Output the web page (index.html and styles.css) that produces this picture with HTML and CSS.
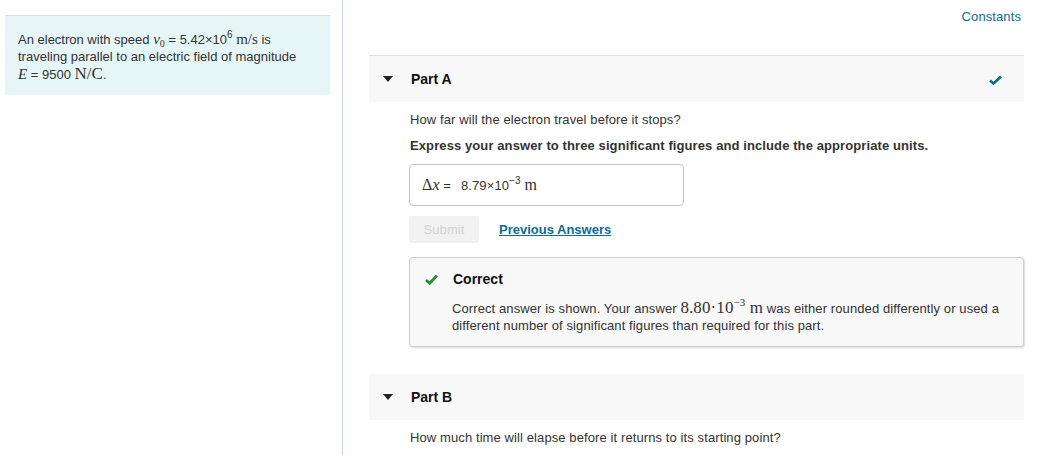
FILE: index.html
```html
<!DOCTYPE html>
<html>
<head>
<meta charset="utf-8">
<link rel="stylesheet" href="styles.css">
</head>
<body>
<div class="page">
  <aside class="left">
    <div class="intro">
      An electron with speed <span class="nw"><span class="mi">v</span><span class="sub">0</span> = 5.42×10<sup class="sup">6</sup> <span class="mu">m/s</span></span> is traveling parallel to an electric field of magnitude <span class="nw"><span class="mi">E</span> = 9500 <span class="mu big">N/C</span>.</span>
    </div>
  </aside>
  <main class="right">
    <div class="topbar"><a class="constants">Constants</a></div>

    <section class="part">
      <div class="part-head">
        <span class="tri"></span>
        <span class="part-title">Part A</span>
        <svg class="done" width="13" height="10" viewBox="0 0 13 10"><path d="M1 5.5 L4.5 8.5 L12 1.5" fill="none" stroke="#0d6b8f" stroke-width="2.6"/></svg>
      </div>
      <div class="part-body">
        <p class="q">How far will the electron travel before it stops?</p>
        <p class="instr">Express your answer to three significant figures and include the appropriate units.</p>
        <div class="answer">
          <span class="lbl"><span class="mu">Δ</span><span class="mi">x</span> =</span>
          <span class="val">8.79×10<sup class="sup">−3</sup> <span class="mu">m</span></span>
        </div>
        <div class="actions">
          <span class="submit">Submit</span>
          <a class="prev">Previous Answers</a>
        </div>
        <div class="feedback">
          <div class="fb-head">
            <svg class="ok" width="13" height="11" viewBox="0 0 13 11"><path d="M1 6 L4.7 9.3 L12 1.5" fill="none" stroke="#2f8a3c" stroke-width="2.8"/></svg>
            <span class="fb-title">Correct</span>
          </div>
          <p class="fb-text">Correct answer is shown. Your answer <span class="mu lg">8.80·10<sup class="sup2">−3</sup> m</span> was either rounded differently or used a different number of significant figures than required for this part.</p>
        </div>
      </div>
    </section>

    <section class="part partb">
      <div class="part-head">
        <span class="tri"></span>
        <span class="part-title">Part B</span>
      </div>
      <div class="part-body">
        <p class="q">How much time will elapse before it returns to its starting point?</p>
      </div>
    </section>
  </main>
</div>
</body>
</html>
```
FILE: styles.css
```css
html, body {
  margin: 0;
  padding: 0;
  background: #fff;
}
body {
  font-family: "Liberation Sans", Arial, sans-serif;
  font-size: 13px;
  letter-spacing: 0.1px;
  color: #333;
}
.page {
  display: flex;
  height: 455px;
  overflow: hidden;
}
.left {
  width: 337px;
  padding: 15px 0 0 5px;
  border-right: 1px solid #c6d6e1;
  flex: none;
}
.intro {
  width: 302px;
  height: 64px;
  padding: 15px 10px 0 13px;
  background: #e6f6f7;
  border-top: 1px solid #dcdfe2;
  line-height: 17px;
  letter-spacing: 0;
  color: #333;
}
.nw { white-space: nowrap; }
.mi {
  font-family: "Liberation Serif", "DejaVu Serif", serif;
  font-style: italic;
  font-size: 15px;
}
.mu {
  font-family: "Liberation Serif", "DejaVu Serif", serif;
  font-size: 15px;
}
.mu.big { font-size: 17px; }
.sub {
  font-family: "Liberation Serif", serif;
  font-size: 10px;
  vertical-align: -3px;
  line-height: 0;
}
.sup {
  font-size: 10px;
  vertical-align: 6px;
  line-height: 0;
}
.right {
  flex: 1;
  padding: 0 17px 0 26px;
}
.topbar {
  display: flex;
  justify-content: flex-end;
  height: 55px;
  padding-right: 3px;
}
.constants {
  color: #0b6a9a;
  margin-top: 9px;
  line-height: 15px;
}
.part-head {
  height: 46px;
  border-top: 1px solid #e0e0e0;
  background: #f8f8f8;
  display: flex;
  align-items: center;
  padding-left: 14px;
  padding-right: 22px;
}
.tri {
  width: 0;
  height: 0;
  border-left: 5px solid transparent;
  border-right: 5px solid transparent;
  border-top: 6px solid #222;
  margin-right: 18px;
}
.part-title {
  font-weight: bold;
  font-size: 14px;
  letter-spacing: 0;
  color: #111;
  flex: 1;
}
.done { margin-top: 1px; }
.part-body {
  padding-left: 41px;
}
.q {
  margin: 10px 0 0;
  line-height: 16px;
}
.instr {
  margin: 10px 0 0;
  font-weight: bold;
  line-height: 16px;
}
.answer {
  margin: 10px 0 0 -1px;
  height: 40px;
  border: 1px solid #c4c4c4;
  border-radius: 4px;
  display: flex;
  align-items: center;
  padding-left: 12px;
  box-sizing: content-box;
  width: 261px;
}
.lbl {
  margin-right: 10px;
}
.lbl .mu, .lbl .mi { font-size: 16px; }
.val .mu { font-size: 16px; }
.actions {
  display: flex;
  align-items: center;
  margin: 10px 0 0 -1px;
}
.submit {
  width: 70px;
  height: 27px;
  line-height: 27px;
  text-align: center;
  background: #f1f1f1;
  color: #d2d2d2;
  border-radius: 2px;
}
.prev {
  margin-left: 20px;
  color: #0b6a9a;
  font-weight: bold;
  letter-spacing: 0;
  text-decoration: underline;
}
.feedback {
  margin: 14px 0 0 -1px;
  border: 1px solid #cfcfcf;
  border-radius: 4px;
  background: #f8f8f8;
  box-shadow: 1px 1px 2px rgba(0,0,0,0.15);
  padding: 13px 14px 0 15px;
  box-sizing: border-box;
  height: 90px;
}
.fb-head {
  display: flex;
  align-items: center;
  height: 16px;
}
.ok { margin-right: 15px; }
.fb-title {
  font-weight: bold;
  font-size: 14px;
  letter-spacing: 0;
  color: #111;
}
.fb-text {
  margin: 12px 0 0 27px;
  line-height: 17px;
  color: #333;
}
.mu.lg { font-size: 17px; }
.sup2 {
  font-size: 11px;
  vertical-align: 7px;
  line-height: 0;
}
.partb {
  margin-top: 27px;
}
.partb .part-head { border-top: none; }
.partb .q { margin-top: 10px; }
```
